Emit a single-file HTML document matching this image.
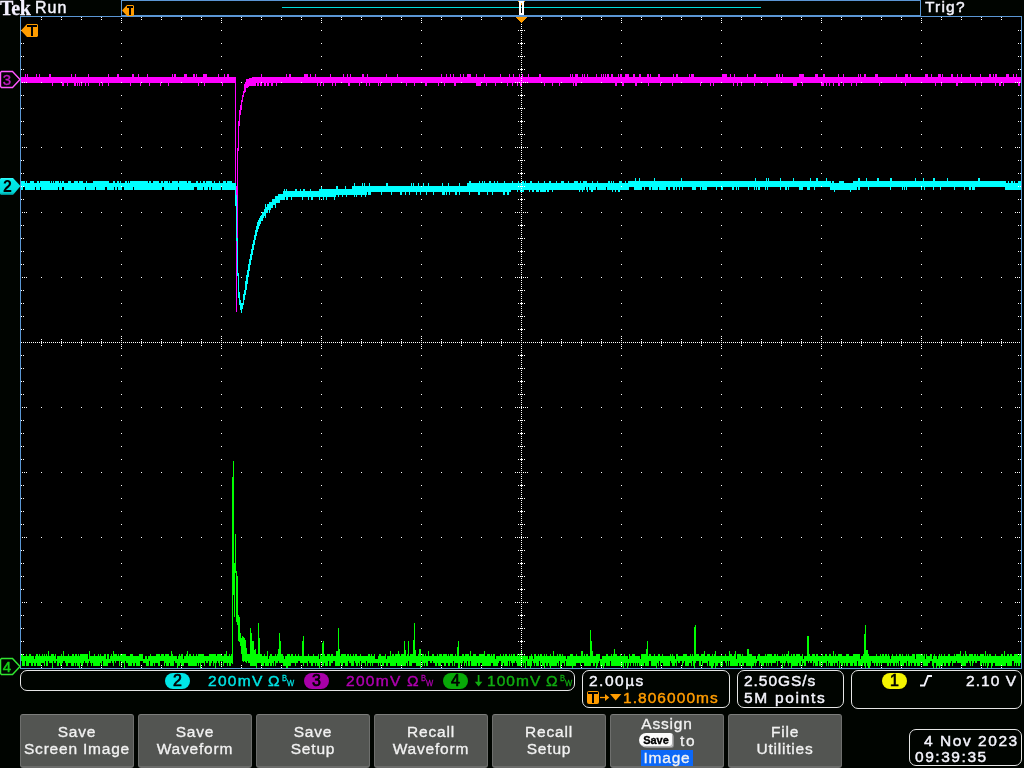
<!DOCTYPE html>
<html>
<head>
<meta charset="utf-8">
<title>Tek scope</title>
<style>
html,body{margin:0;padding:0;background:#000400;}
body{will-change:transform;width:1024px;height:768px;position:relative;overflow:hidden;font-family:"Liberation Sans",sans-serif;color:#f4f4fc;}
.abs{position:absolute;}
#tek{left:0;top:-4px;font-family:"Liberation Serif",serif;font-weight:bold;font-size:20px;letter-spacing:-0.3px;-webkit-text-stroke:0.3px;color:#f4f0ff;line-height:24px;}
#run{left:35px;top:-1px;font-size:16px;letter-spacing:1.0px;line-height:18px;-webkit-text-stroke:0.45px;}
#trig{left:925px;top:-2px;font-size:15.5px;letter-spacing:1.2px;line-height:18px;-webkit-text-stroke:0.45px;}
#rec{left:121px;top:0;width:798px;height:14px;border:1px solid #5b97d4;}
#grat{left:20px;top:16px;width:1000px;height:651px;border:1px solid #5b97d4;background:#000;}
svg{position:absolute;left:0;top:0;}
.box{position:absolute;border:1px solid #e6e6e6;border-radius:7px;box-sizing:border-box;}
.t{position:absolute;font-size:15.5px;line-height:18px;white-space:nowrap;letter-spacing:1.05px;-webkit-text-stroke:0.45px;}
.pill{position:absolute;width:25px;height:16px;border-radius:8px;color:#000;font-size:16px;line-height:16px;text-align:center;-webkit-text-stroke:0.7px;}
.bw{position:absolute;font-size:9.5px;line-height:9px;letter-spacing:0;transform-origin:0 0;transform:scaleX(0.8);-webkit-text-stroke:0.3px;}
.btn{position:absolute;top:714px;width:114px;height:54px;box-sizing:border-box;background:#535552;border:1px solid #6e6f6d;border-top-color:#7d7e7c;border-bottom:2px solid #6b6c6a;border-radius:3px;text-align:center;font-size:15.5px;line-height:18px;letter-spacing:0.8px;color:#f2f2f2;-webkit-text-stroke:0.32px;}
.btn span{position:absolute;left:0;width:112px;text-align:center;white-space:nowrap;}
</style>
</head>
<body>
<div class="abs" id="rec"></div>
<div class="abs" id="grat"></div>
<div class="abs" id="tek">Tek</div>
<div class="abs" id="run">Run</div>
<div class="abs" id="trig">Trig?</div>

<svg width="1024" height="768" viewBox="0 0 1024 768" shape-rendering="crispEdges" fill="none" stroke-width="1">
<!-- record view line -->
<path d="M282 7.5H761" stroke="#00dede"/>
<!-- waveforms -->
<path d="M21.5 77V83M22.5 77V83M23.5 77V83M24.5 77V83M25.5 74V83M26.5 77V83M27.5 74V83M28.5 77V83M29.5 77V83M30.5 77V83M31.5 77V83M32.5 77V83M33.5 77V83M34.5 77V83M35.5 77V83M36.5 74V83M37.5 77V83M38.5 77V83M39.5 74V83M40.5 77V83M41.5 77V83M42.5 77V83M43.5 77V83M44.5 77V83M45.5 77V83M46.5 77V83M47.5 77V83M48.5 77V83M49.5 74V83M50.5 74V83M51.5 77V83M52.5 77V86M53.5 77V83M54.5 77V83M55.5 77V83M56.5 77V83M57.5 77V83M58.5 77V83M59.5 77V83M60.5 77V83M61.5 77V83M62.5 77V86M63.5 77V86M64.5 77V83M65.5 77V83M66.5 77V83M67.5 77V86M68.5 77V83M69.5 77V83M70.5 77V83M71.5 74V83M72.5 77V83M73.5 77V83M74.5 77V86M75.5 74V86M76.5 77V83M77.5 77V86M78.5 77V83M79.5 77V86M80.5 77V83M81.5 77V86M82.5 77V83M83.5 77V83M84.5 77V83M85.5 77V86M86.5 77V83M87.5 77V83M88.5 74V86M89.5 77V83M90.5 77V83M91.5 77V83M92.5 77V83M93.5 77V83M94.5 77V83M95.5 77V83M96.5 77V83M97.5 77V83M98.5 77V83M99.5 77V86M100.5 77V83M101.5 77V83M102.5 77V86M103.5 77V83M104.5 77V83M105.5 77V83M106.5 77V83M107.5 77V83M108.5 74V86M109.5 77V83M110.5 77V83M111.5 77V83M112.5 77V83M113.5 77V83M114.5 77V83M115.5 77V83M116.5 77V83M117.5 74V83M118.5 74V83M119.5 77V83M120.5 77V83M121.5 77V83M122.5 77V83M123.5 77V83M124.5 77V83M125.5 77V83M126.5 77V83M127.5 77V83M128.5 77V83M129.5 77V83M130.5 77V86M131.5 77V83M132.5 74V83M133.5 74V83M134.5 77V83M135.5 77V83M136.5 77V83M137.5 77V83M138.5 74V83M139.5 77V83M140.5 77V86M141.5 77V83M142.5 77V83M143.5 77V83M144.5 77V83M145.5 77V83M146.5 77V83M147.5 74V83M148.5 77V83M149.5 77V86M150.5 77V83M151.5 77V83M152.5 77V83M153.5 77V83M154.5 77V83M155.5 77V83M156.5 77V83M157.5 77V83M158.5 77V83M159.5 77V83M160.5 77V86M161.5 77V83M162.5 77V83M163.5 77V83M164.5 77V83M165.5 77V83M166.5 77V83M167.5 77V83M168.5 77V86M169.5 77V83M170.5 77V83M171.5 77V83M172.5 74V83M173.5 77V83M174.5 74V83M175.5 74V83M176.5 77V83M177.5 77V83M178.5 77V83M179.5 77V83M180.5 77V83M181.5 77V83M182.5 77V83M183.5 77V83M184.5 74V83M185.5 74V83M186.5 74V83M187.5 77V83M188.5 77V83M189.5 77V83M190.5 77V83M191.5 77V83M192.5 77V83M193.5 74V83M194.5 74V83M195.5 77V83M196.5 74V83M197.5 77V83M198.5 77V86M199.5 77V83M200.5 77V83M201.5 77V83M202.5 77V83M203.5 74V83M204.5 74V86M205.5 74V83M206.5 74V83M207.5 77V83M208.5 77V83M209.5 77V83M210.5 77V83M211.5 77V83M212.5 77V83M213.5 77V83M214.5 77V83M215.5 77V83M216.5 77V83M217.5 77V83M218.5 74V83M219.5 77V83M220.5 77V83M221.5 77V83M222.5 77V86M223.5 77V83M224.5 74V83M225.5 77V83M226.5 77V83M227.5 74V83M228.5 74V83M229.5 77V83M230.5 77V83M231.5 77V83M232.5 77V83M233.5 77V83M234.5 77V83M235.5 77V187M236.5 186V312M237.5 148V241M238.5 121V151M239.5 110V126M240.5 105V115M241.5 100V110M242.5 95V102M243.5 91V97M244.5 84V93M245.5 82V92M246.5 79V88M247.5 79V88M248.5 79V87M249.5 78V86M250.5 78V86M251.5 78V86M252.5 77V86M253.5 77V86M254.5 77V86M255.5 77V86M256.5 77V83M257.5 77V86M258.5 77V86M259.5 77V83M260.5 77V86M261.5 74V86M262.5 77V83M263.5 77V83M264.5 77V86M265.5 77V86M266.5 77V83M267.5 77V86M268.5 77V86M269.5 77V83M270.5 77V83M271.5 77V86M272.5 77V86M273.5 77V83M274.5 77V83M275.5 77V83M276.5 77V86M277.5 77V83M278.5 77V83M279.5 77V83M280.5 77V83M281.5 77V83M282.5 77V83M283.5 77V83M284.5 77V83M285.5 77V83M286.5 74V83M287.5 77V83M288.5 77V83M289.5 74V83M290.5 74V83M291.5 77V83M292.5 77V83M293.5 77V83M294.5 77V83M295.5 77V83M296.5 77V83M297.5 77V83M298.5 77V83M299.5 77V83M300.5 77V83M301.5 77V83M302.5 77V83M303.5 77V83M304.5 74V83M305.5 74V83M306.5 74V83M307.5 74V83M308.5 77V83M309.5 77V83M310.5 74V83M311.5 77V83M312.5 77V83M313.5 77V83M314.5 77V83M315.5 74V83M316.5 77V83M317.5 77V86M318.5 77V83M319.5 77V83M320.5 77V86M321.5 77V83M322.5 77V83M323.5 77V86M324.5 77V83M325.5 77V83M326.5 77V83M327.5 77V83M328.5 77V83M329.5 77V83M330.5 74V83M331.5 77V83M332.5 77V86M333.5 77V83M334.5 77V83M335.5 77V86M336.5 77V83M337.5 77V83M338.5 77V83M339.5 77V83M340.5 77V83M341.5 77V83M342.5 77V83M343.5 74V83M344.5 77V83M345.5 77V83M346.5 77V83M347.5 74V83M348.5 77V86M349.5 77V86M350.5 74V83M351.5 77V83M352.5 77V83M353.5 77V83M354.5 77V83M355.5 77V83M356.5 77V83M357.5 77V83M358.5 77V83M359.5 77V86M360.5 77V83M361.5 77V83M362.5 74V83M363.5 74V83M364.5 77V83M365.5 77V83M366.5 77V86M367.5 74V83M368.5 77V83M369.5 77V86M370.5 77V83M371.5 77V83M372.5 77V83M373.5 77V83M374.5 77V83M375.5 77V83M376.5 77V83M377.5 77V83M378.5 77V86M379.5 77V83M380.5 77V86M381.5 77V83M382.5 77V83M383.5 77V83M384.5 77V83M385.5 77V83M386.5 74V83M387.5 77V83M388.5 77V83M389.5 77V83M390.5 77V83M391.5 77V86M392.5 77V83M393.5 77V83M394.5 77V83M395.5 77V83M396.5 77V83M397.5 74V83M398.5 77V83M399.5 77V83M400.5 77V83M401.5 77V83M402.5 77V83M403.5 77V83M404.5 77V83M405.5 77V83M406.5 77V86M407.5 77V83M408.5 77V83M409.5 77V83M410.5 77V83M411.5 77V83M412.5 77V83M413.5 77V83M414.5 77V86M415.5 77V83M416.5 77V83M417.5 77V83M418.5 77V83M419.5 77V83M420.5 77V83M421.5 77V83M422.5 77V83M423.5 77V83M424.5 77V83M425.5 77V86M426.5 77V86M427.5 77V83M428.5 77V83M429.5 77V83M430.5 77V83M431.5 77V83M432.5 77V83M433.5 77V83M434.5 77V83M435.5 77V83M436.5 77V83M437.5 77V83M438.5 77V86M439.5 77V83M440.5 77V83M441.5 74V83M442.5 77V83M443.5 77V83M444.5 77V86M445.5 77V83M446.5 74V83M447.5 77V83M448.5 77V83M449.5 77V83M450.5 74V83M451.5 77V83M452.5 77V83M453.5 74V83M454.5 77V86M455.5 77V86M456.5 77V83M457.5 77V83M458.5 77V83M459.5 77V83M460.5 74V83M461.5 77V83M462.5 77V83M463.5 74V83M464.5 77V83M465.5 77V83M466.5 77V83M467.5 74V83M468.5 74V83M469.5 74V83M470.5 74V83M471.5 77V83M472.5 77V83M473.5 77V83M474.5 77V83M475.5 77V83M476.5 74V86M477.5 77V86M478.5 77V86M479.5 77V86M480.5 77V86M481.5 77V83M482.5 77V83M483.5 77V83M484.5 74V83M485.5 77V83M486.5 77V86M487.5 77V83M488.5 77V83M489.5 77V83M490.5 77V83M491.5 77V83M492.5 77V83M493.5 77V83M494.5 77V83M495.5 77V86M496.5 77V83M497.5 77V83M498.5 77V83M499.5 77V83M500.5 74V83M501.5 77V83M502.5 77V83M503.5 77V83M504.5 77V83M505.5 77V83M506.5 77V83M507.5 77V86M508.5 77V83M509.5 74V83M510.5 77V83M511.5 77V83M512.5 77V86M513.5 74V83M514.5 77V83M515.5 77V83M516.5 77V83M517.5 77V86M518.5 77V83M519.5 74V83M520.5 77V86M521.5 77V86M522.5 74V83M523.5 77V83M524.5 77V83M525.5 77V83M526.5 77V83M527.5 77V83M528.5 74V83M529.5 77V83M530.5 77V83M531.5 77V83M532.5 77V83M533.5 77V83M534.5 77V83M535.5 77V83M536.5 77V83M537.5 77V83M538.5 77V83M539.5 74V83M540.5 74V83M541.5 77V83M542.5 77V83M543.5 77V83M544.5 77V86M545.5 77V83M546.5 77V83M547.5 77V83M548.5 77V83M549.5 77V83M550.5 77V83M551.5 77V83M552.5 77V86M553.5 77V83M554.5 77V83M555.5 77V83M556.5 77V83M557.5 77V83M558.5 77V83M559.5 77V86M560.5 77V83M561.5 77V83M562.5 77V83M563.5 77V83M564.5 77V83M565.5 77V83M566.5 77V83M567.5 77V83M568.5 77V83M569.5 77V83M570.5 74V83M571.5 77V83M572.5 74V83M573.5 77V86M574.5 77V83M575.5 74V86M576.5 74V86M577.5 74V83M578.5 77V83M579.5 77V83M580.5 77V83M581.5 77V83M582.5 74V83M583.5 77V83M584.5 74V83M585.5 77V83M586.5 77V83M587.5 74V83M588.5 77V83M589.5 77V83M590.5 77V83M591.5 77V83M592.5 77V83M593.5 77V83M594.5 77V83M595.5 77V83M596.5 74V83M597.5 77V83M598.5 77V83M599.5 77V83M600.5 77V83M601.5 74V83M602.5 77V83M603.5 74V83M604.5 77V83M605.5 74V83M606.5 77V83M607.5 74V83M608.5 74V83M609.5 77V83M610.5 77V83M611.5 74V83M612.5 74V83M613.5 77V83M614.5 77V83M615.5 77V86M616.5 77V86M617.5 77V83M618.5 74V83M619.5 77V83M620.5 74V83M621.5 74V83M622.5 77V86M623.5 77V86M624.5 77V83M625.5 74V83M626.5 74V83M627.5 74V83M628.5 74V83M629.5 77V83M630.5 77V83M631.5 77V83M632.5 77V83M633.5 74V83M634.5 74V83M635.5 77V86M636.5 77V86M637.5 77V83M638.5 77V83M639.5 74V83M640.5 74V83M641.5 77V83M642.5 77V83M643.5 77V83M644.5 77V83M645.5 77V83M646.5 77V83M647.5 74V83M648.5 74V86M649.5 77V83M650.5 74V83M651.5 77V83M652.5 77V83M653.5 77V83M654.5 77V83M655.5 77V83M656.5 77V83M657.5 77V83M658.5 74V83M659.5 74V83M660.5 77V86M661.5 77V83M662.5 77V83M663.5 77V83M664.5 77V83M665.5 77V83M666.5 77V83M667.5 77V83M668.5 77V83M669.5 77V83M670.5 77V83M671.5 77V83M672.5 77V86M673.5 74V83M674.5 77V83M675.5 77V83M676.5 74V83M677.5 74V83M678.5 77V83M679.5 77V83M680.5 77V83M681.5 77V83M682.5 77V83M683.5 77V83M684.5 77V83M685.5 77V83M686.5 77V83M687.5 77V83M688.5 77V83M689.5 74V83M690.5 77V83M691.5 74V83M692.5 74V83M693.5 74V83M694.5 77V83M695.5 77V83M696.5 77V83M697.5 77V83M698.5 77V83M699.5 77V83M700.5 77V86M701.5 77V83M702.5 77V83M703.5 77V83M704.5 77V83M705.5 77V83M706.5 77V83M707.5 77V83M708.5 77V83M709.5 77V83M710.5 77V86M711.5 77V83M712.5 77V83M713.5 77V86M714.5 77V83M715.5 77V83M716.5 77V83M717.5 77V83M718.5 77V83M719.5 77V83M720.5 77V83M721.5 77V83M722.5 74V83M723.5 74V83M724.5 74V83M725.5 74V83M726.5 74V83M727.5 77V83M728.5 77V83M729.5 77V83M730.5 74V83M731.5 77V83M732.5 77V83M733.5 77V86M734.5 74V83M735.5 77V83M736.5 77V83M737.5 77V86M738.5 77V83M739.5 77V83M740.5 77V83M741.5 77V86M742.5 77V83M743.5 77V83M744.5 77V83M745.5 77V83M746.5 77V83M747.5 74V83M748.5 77V83M749.5 77V83M750.5 77V83M751.5 77V83M752.5 77V83M753.5 77V83M754.5 74V86M755.5 74V83M756.5 77V83M757.5 77V83M758.5 77V83M759.5 77V83M760.5 77V83M761.5 77V83M762.5 77V83M763.5 77V83M764.5 77V83M765.5 77V83M766.5 77V83M767.5 77V86M768.5 77V83M769.5 77V83M770.5 77V83M771.5 77V83M772.5 77V83M773.5 77V83M774.5 77V83M775.5 77V83M776.5 74V83M777.5 74V83M778.5 77V83M779.5 74V83M780.5 77V83M781.5 77V83M782.5 74V83M783.5 77V83M784.5 77V83M785.5 77V83M786.5 77V83M787.5 77V83M788.5 77V83M789.5 77V83M790.5 77V83M791.5 77V83M792.5 77V83M793.5 77V86M794.5 77V86M795.5 77V86M796.5 77V86M797.5 77V83M798.5 77V83M799.5 74V83M800.5 74V83M801.5 74V83M802.5 74V86M803.5 74V83M804.5 77V83M805.5 77V83M806.5 77V83M807.5 77V83M808.5 77V83M809.5 77V83M810.5 77V83M811.5 77V83M812.5 77V83M813.5 77V83M814.5 77V83M815.5 74V83M816.5 74V83M817.5 74V83M818.5 77V83M819.5 77V83M820.5 77V83M821.5 77V86M822.5 77V86M823.5 74V86M824.5 74V83M825.5 77V83M826.5 77V86M827.5 77V83M828.5 77V83M829.5 77V86M830.5 77V83M831.5 77V83M832.5 77V83M833.5 77V86M834.5 77V83M835.5 77V83M836.5 77V83M837.5 77V83M838.5 74V86M839.5 77V86M840.5 77V83M841.5 77V83M842.5 77V83M843.5 74V86M844.5 77V83M845.5 77V83M846.5 77V83M847.5 77V83M848.5 77V83M849.5 77V83M850.5 77V83M851.5 77V86M852.5 77V83M853.5 77V83M854.5 77V83M855.5 77V83M856.5 77V86M857.5 77V83M858.5 74V83M859.5 77V83M860.5 74V83M861.5 77V83M862.5 77V83M863.5 77V83M864.5 74V83M865.5 74V83M866.5 77V83M867.5 77V83M868.5 77V83M869.5 77V83M870.5 77V83M871.5 77V83M872.5 77V83M873.5 77V83M874.5 77V83M875.5 74V83M876.5 74V83M877.5 74V83M878.5 77V83M879.5 77V86M880.5 77V83M881.5 77V83M882.5 77V83M883.5 77V83M884.5 77V83M885.5 77V83M886.5 77V83M887.5 77V83M888.5 77V83M889.5 77V83M890.5 77V83M891.5 77V83M892.5 77V83M893.5 77V83M894.5 77V83M895.5 77V83M896.5 74V83M897.5 77V83M898.5 77V83M899.5 77V83M900.5 77V83M901.5 77V83M902.5 77V83M903.5 77V83M904.5 77V83M905.5 74V86M906.5 74V83M907.5 74V83M908.5 77V83M909.5 77V83M910.5 74V83M911.5 77V83M912.5 77V83M913.5 77V83M914.5 77V83M915.5 77V83M916.5 77V83M917.5 77V83M918.5 77V83M919.5 77V83M920.5 77V83M921.5 77V83M922.5 77V83M923.5 77V83M924.5 77V83M925.5 74V83M926.5 74V83M927.5 74V83M928.5 77V83M929.5 77V83M930.5 77V83M931.5 74V83M932.5 77V83M933.5 77V83M934.5 77V83M935.5 77V86M936.5 77V83M937.5 77V83M938.5 74V83M939.5 74V83M940.5 74V83M941.5 77V86M942.5 74V83M943.5 77V83M944.5 77V83M945.5 77V83M946.5 77V83M947.5 77V83M948.5 77V83M949.5 77V83M950.5 77V83M951.5 74V83M952.5 74V83M953.5 77V83M954.5 77V83M955.5 77V83M956.5 77V86M957.5 74V86M958.5 77V83M959.5 77V83M960.5 77V83M961.5 74V83M962.5 77V83M963.5 77V83M964.5 77V83M965.5 77V83M966.5 77V83M967.5 77V83M968.5 77V83M969.5 77V83M970.5 74V83M971.5 77V83M972.5 77V83M973.5 77V83M974.5 77V83M975.5 77V86M976.5 77V83M977.5 77V83M978.5 77V83M979.5 77V83M980.5 74V83M981.5 77V86M982.5 77V83M983.5 77V83M984.5 77V83M985.5 77V83M986.5 77V83M987.5 77V83M988.5 77V83M989.5 74V83M990.5 74V83M991.5 77V83M992.5 77V83M993.5 74V83M994.5 77V83M995.5 74V86M996.5 74V83M997.5 77V83M998.5 77V83M999.5 77V86M1000.5 77V86M1001.5 77V83M1002.5 77V83M1003.5 77V86M1004.5 77V83M1005.5 77V83M1006.5 74V83M1007.5 74V83M1008.5 74V83M1009.5 77V83M1010.5 77V83M1011.5 77V83M1012.5 77V83M1013.5 74V83M1014.5 77V83M1015.5 77V83M1016.5 74V83M1017.5 77V83M1018.5 77V86M1019.5 77V86M1020.5 77V83" stroke="#ff00ff"/>
<path d="M21.5 181V190M22.5 181V190M23.5 181V187M24.5 181V187M25.5 183V190M26.5 181V190M27.5 183V190M28.5 183V190M29.5 183V190M30.5 181V190M31.5 181V190M32.5 181V190M33.5 181V190M34.5 183V190M35.5 183V187M36.5 183V190M37.5 181V190M38.5 181V190M39.5 183V190M40.5 181V187M41.5 181V190M42.5 181V190M43.5 181V190M44.5 181V190M45.5 181V190M46.5 181V190M47.5 181V190M48.5 181V190M49.5 181V190M50.5 183V190M51.5 181V190M52.5 183V190M53.5 181V190M54.5 183V190M55.5 181V190M56.5 181V190M57.5 181V190M58.5 181V187M59.5 183V190M60.5 181V190M61.5 183V190M62.5 181V187M63.5 181V187M64.5 183V190M65.5 183V190M66.5 183V190M67.5 183V190M68.5 181V190M69.5 181V190M70.5 181V190M71.5 183V190M72.5 183V190M73.5 183V190M74.5 181V190M75.5 181V190M76.5 181V190M77.5 181V190M78.5 183V190M79.5 181V190M80.5 181V190M81.5 181V190M82.5 181V190M83.5 183V190M84.5 183V190M85.5 183V187M86.5 181V190M87.5 183V190M88.5 183V190M89.5 183V190M90.5 183V190M91.5 183V190M92.5 183V190M93.5 181V190M94.5 181V190M95.5 181V187M96.5 181V190M97.5 181V190M98.5 181V190M99.5 181V190M100.5 181V190M101.5 181V190M102.5 181V190M103.5 181V190M104.5 181V190M105.5 181V187M106.5 181V187M107.5 181V190M108.5 181V190M109.5 183V190M110.5 183V190M111.5 183V190M112.5 183V190M113.5 181V190M114.5 181V187M115.5 183V190M116.5 183V190M117.5 181V187M118.5 181V190M119.5 183V190M120.5 181V190M121.5 183V190M122.5 183V187M123.5 183V187M124.5 183V190M125.5 181V190M126.5 181V190M127.5 183V190M128.5 181V190M129.5 183V190M130.5 181V190M131.5 181V190M132.5 181V190M133.5 181V187M134.5 181V190M135.5 181V190M136.5 181V190M137.5 181V190M138.5 181V190M139.5 181V190M140.5 181V190M141.5 181V190M142.5 181V190M143.5 181V190M144.5 181V190M145.5 181V190M146.5 181V190M147.5 181V190M148.5 183V190M149.5 181V190M150.5 181V190M151.5 183V190M152.5 183V190M153.5 181V190M154.5 181V190M155.5 181V190M156.5 181V190M157.5 181V190M158.5 181V190M159.5 183V190M160.5 183V190M161.5 181V190M162.5 181V187M163.5 183V187M164.5 181V190M165.5 181V190M166.5 181V190M167.5 181V190M168.5 183V190M169.5 181V190M170.5 183V190M171.5 183V190M172.5 181V190M173.5 181V190M174.5 181V190M175.5 181V190M176.5 181V190M177.5 181V190M178.5 183V187M179.5 181V190M180.5 181V190M181.5 181V190M182.5 181V190M183.5 181V190M184.5 181V190M185.5 181V190M186.5 181V190M187.5 183V190M188.5 181V190M189.5 181V190M190.5 181V190M191.5 183V190M192.5 183V190M193.5 183V190M194.5 183V187M195.5 183V187M196.5 181V187M197.5 181V190M198.5 183V190M199.5 183V190M200.5 181V190M201.5 183V190M202.5 183V190M203.5 181V187M204.5 181V190M205.5 183V190M206.5 181V190M207.5 181V190M208.5 181V187M209.5 181V190M210.5 181V190M211.5 181V187M212.5 183V190M213.5 183V190M214.5 181V190M215.5 183V190M216.5 183V190M217.5 183V190M218.5 183V190M219.5 181V190M220.5 183V190M221.5 183V187M222.5 183V190M223.5 181V190M224.5 181V190M225.5 181V190M226.5 183V190M227.5 181V190M228.5 181V190M229.5 181V190M230.5 181V190M231.5 181V190M232.5 183V190M233.5 183V190M234.5 183V190M235.5 183V206M236.5 195V241M237.5 238V276M238.5 273V298M239.5 292V305M240.5 300V310M241.5 303V313M242.5 303V309M243.5 294V305M244.5 290V300M245.5 281V295M246.5 275V290M247.5 270V284M248.5 264V277M249.5 259V271M250.5 254V265M251.5 249V260M252.5 244V255M253.5 240V250M254.5 235V245M255.5 230V240M256.5 226V236M257.5 222V232M258.5 220V229M259.5 218V226M260.5 216V224M261.5 215V221M262.5 212V221M263.5 212V218M264.5 209V216M265.5 204V218M266.5 207V213M267.5 204V213M268.5 204V210M269.5 202V213M270.5 202V210M271.5 202V208M272.5 199V208M273.5 199V205M274.5 199V205M275.5 196V208M276.5 196V203M277.5 196V203M278.5 194V203M279.5 194V203M280.5 194V200M281.5 194V200M282.5 194V200M283.5 191V200M284.5 189V200M285.5 191V197M286.5 189V200M287.5 191V200M288.5 191V197M289.5 191V197M290.5 191V197M291.5 191V200M292.5 191V197M293.5 191V197M294.5 191V197M295.5 189V197M296.5 189V197M297.5 191V197M298.5 191V197M299.5 191V197M300.5 189V197M301.5 191V197M302.5 191V200M303.5 189V197M304.5 189V197M305.5 191V197M306.5 191V197M307.5 191V197M308.5 191V200M309.5 191V197M310.5 189V197M311.5 191V200M312.5 191V200M313.5 191V197M314.5 191V197M315.5 191V197M316.5 191V197M317.5 191V197M318.5 191V197M319.5 189V200M320.5 189V197M321.5 186V197M322.5 189V197M323.5 189V200M324.5 189V197M325.5 189V197M326.5 189V200M327.5 189V197M328.5 189V197M329.5 189V197M330.5 189V197M331.5 189V197M332.5 189V197M333.5 189V197M334.5 189V200M335.5 189V197M336.5 186V195M337.5 186V195M338.5 189V197M339.5 189V195M340.5 189V195M341.5 189V195M342.5 189V197M343.5 189V195M344.5 189V195M345.5 186V195M346.5 189V197M347.5 189V195M348.5 189V195M349.5 189V195M350.5 189V195M351.5 189V195M352.5 186V195M353.5 186V195M354.5 183V197M355.5 186V195M356.5 186V197M357.5 186V195M358.5 186V195M359.5 186V195M360.5 186V195M361.5 186V197M362.5 183V195M363.5 186V195M364.5 183V195M365.5 186V197M366.5 186V195M367.5 186V192M368.5 186V195M369.5 183V195M370.5 186V195M371.5 186V192M372.5 186V192M373.5 186V192M374.5 186V192M375.5 186V192M376.5 186V192M377.5 186V192M378.5 186V192M379.5 186V192M380.5 186V192M381.5 186V195M382.5 186V192M383.5 186V192M384.5 186V192M385.5 186V192M386.5 183V192M387.5 183V192M388.5 186V192M389.5 186V192M390.5 186V192M391.5 186V195M392.5 186V192M393.5 186V192M394.5 186V192M395.5 186V192M396.5 186V192M397.5 186V192M398.5 186V192M399.5 186V192M400.5 186V195M401.5 186V195M402.5 186V192M403.5 186V192M404.5 186V192M405.5 186V195M406.5 186V192M407.5 186V192M408.5 186V192M409.5 186V195M410.5 186V192M411.5 183V192M412.5 186V192M413.5 183V192M414.5 186V192M415.5 186V192M416.5 186V195M417.5 186V192M418.5 183V192M419.5 186V192M420.5 186V195M421.5 186V192M422.5 186V192M423.5 183V192M424.5 186V192M425.5 186V192M426.5 186V195M427.5 186V192M428.5 183V192M429.5 186V192M430.5 186V192M431.5 186V192M432.5 186V192M433.5 186V195M434.5 186V192M435.5 186V192M436.5 186V192M437.5 186V192M438.5 186V192M439.5 186V192M440.5 186V192M441.5 186V192M442.5 183V195M443.5 186V195M444.5 186V195M445.5 186V192M446.5 186V195M447.5 186V192M448.5 183V192M449.5 186V195M450.5 186V192M451.5 186V192M452.5 186V192M453.5 186V192M454.5 186V192M455.5 186V195M456.5 186V195M457.5 186V192M458.5 186V192M459.5 183V195M460.5 186V192M461.5 186V192M462.5 186V192M463.5 186V192M464.5 186V192M465.5 186V192M466.5 186V192M467.5 183V192M468.5 183V192M469.5 181V195M470.5 181V192M471.5 183V192M472.5 183V192M473.5 183V192M474.5 183V192M475.5 183V192M476.5 183V192M477.5 183V192M478.5 183V195M479.5 181V195M480.5 183V192M481.5 183V192M482.5 181V192M483.5 183V192M484.5 181V192M485.5 183V192M486.5 183V192M487.5 183V195M488.5 183V192M489.5 181V192M490.5 181V192M491.5 183V192M492.5 183V195M493.5 183V192M494.5 181V192M495.5 183V192M496.5 183V192M497.5 181V192M498.5 183V192M499.5 183V192M500.5 183V192M501.5 183V192M502.5 183V192M503.5 183V195M504.5 181V195M505.5 183V192M506.5 183V192M507.5 183V195M508.5 183V195M509.5 183V192M510.5 183V192M511.5 183V190M512.5 181V190M513.5 183V190M514.5 183V190M515.5 183V190M516.5 183V190M517.5 183V192M518.5 181V190M519.5 183V190M520.5 183V192M521.5 183V192M522.5 181V192M523.5 181V192M524.5 183V190M525.5 181V190M526.5 183V190M527.5 183V190M528.5 183V190M529.5 183V192M530.5 181V190M531.5 181V190M532.5 183V192M533.5 183V192M534.5 183V190M535.5 183V190M536.5 183V192M537.5 183V192M538.5 181V192M539.5 183V190M540.5 183V192M541.5 183V192M542.5 183V192M543.5 183V192M544.5 181V192M545.5 183V192M546.5 183V190M547.5 183V192M548.5 183V192M549.5 181V190M550.5 181V190M551.5 183V190M552.5 183V192M553.5 183V190M554.5 183V190M555.5 183V190M556.5 181V190M557.5 183V190M558.5 183V190M559.5 183V190M560.5 183V190M561.5 181V190M562.5 181V190M563.5 181V190M564.5 183V190M565.5 183V190M566.5 183V190M567.5 183V190M568.5 181V190M569.5 183V190M570.5 183V190M571.5 183V190M572.5 183V190M573.5 183V190M574.5 181V190M575.5 181V190M576.5 181V190M577.5 181V190M578.5 183V190M579.5 183V192M580.5 181V190M581.5 183V190M582.5 183V192M583.5 181V190M584.5 181V190M585.5 181V187M586.5 181V190M587.5 183V192M588.5 183V187M589.5 183V190M590.5 183V190M591.5 183V192M592.5 181V192M593.5 183V190M594.5 183V190M595.5 183V190M596.5 183V187M597.5 181V190M598.5 183V190M599.5 183V190M600.5 183V190M601.5 183V190M602.5 183V190M603.5 183V190M604.5 183V190M605.5 183V190M606.5 183V187M607.5 183V190M608.5 181V190M609.5 181V190M610.5 183V190M611.5 181V190M612.5 183V192M613.5 181V190M614.5 183V190M615.5 183V192M616.5 183V190M617.5 183V190M618.5 183V192M619.5 181V192M620.5 181V190M621.5 181V190M622.5 183V190M623.5 183V190M624.5 183V190M625.5 181V190M626.5 183V190M627.5 183V190M628.5 181V190M629.5 181V187M630.5 181V187M631.5 181V187M632.5 181V187M633.5 181V187M634.5 181V190M635.5 178V190M636.5 181V190M637.5 181V190M638.5 181V190M639.5 178V190M640.5 181V190M641.5 181V190M642.5 181V187M643.5 181V187M644.5 181V190M645.5 181V187M646.5 181V187M647.5 181V187M648.5 181V187M649.5 181V190M650.5 181V190M651.5 181V187M652.5 181V190M653.5 181V190M654.5 178V190M655.5 181V190M656.5 181V190M657.5 181V190M658.5 181V187M659.5 181V190M660.5 181V190M661.5 181V190M662.5 181V190M663.5 181V190M664.5 181V190M665.5 181V190M666.5 181V187M667.5 181V187M668.5 181V190M669.5 181V190M670.5 181V187M671.5 181V187M672.5 181V187M673.5 181V190M674.5 181V190M675.5 181V187M676.5 181V190M677.5 181V187M678.5 181V187M679.5 181V190M680.5 181V187M681.5 178V187M682.5 181V190M683.5 181V187M684.5 181V187M685.5 181V187M686.5 181V187M687.5 181V187M688.5 181V187M689.5 181V187M690.5 181V187M691.5 181V187M692.5 181V190M693.5 181V190M694.5 181V190M695.5 181V190M696.5 181V187M697.5 181V187M698.5 181V187M699.5 181V187M700.5 181V190M701.5 181V187M702.5 181V190M703.5 181V190M704.5 181V190M705.5 181V190M706.5 181V190M707.5 181V187M708.5 181V187M709.5 181V187M710.5 181V187M711.5 181V187M712.5 181V187M713.5 181V187M714.5 181V187M715.5 181V187M716.5 181V190M717.5 181V187M718.5 181V187M719.5 181V187M720.5 181V187M721.5 181V190M722.5 181V190M723.5 181V187M724.5 181V187M725.5 181V187M726.5 181V187M727.5 181V187M728.5 181V187M729.5 181V187M730.5 181V187M731.5 181V187M732.5 181V190M733.5 181V190M734.5 181V187M735.5 181V187M736.5 181V190M737.5 181V187M738.5 181V190M739.5 181V187M740.5 181V187M741.5 181V187M742.5 181V187M743.5 181V187M744.5 181V187M745.5 181V187M746.5 181V187M747.5 181V187M748.5 181V190M749.5 181V187M750.5 181V187M751.5 181V187M752.5 181V187M753.5 181V187M754.5 181V190M755.5 178V187M756.5 181V190M757.5 181V187M758.5 181V190M759.5 181V190M760.5 181V187M761.5 181V187M762.5 181V187M763.5 181V187M764.5 181V187M765.5 181V190M766.5 178V187M767.5 181V190M768.5 178V187M769.5 181V187M770.5 181V187M771.5 181V187M772.5 181V187M773.5 181V187M774.5 181V187M775.5 181V187M776.5 181V187M777.5 181V187M778.5 181V187M779.5 181V187M780.5 178V190M781.5 181V187M782.5 181V187M783.5 181V187M784.5 181V187M785.5 181V190M786.5 181V190M787.5 181V187M788.5 181V190M789.5 181V187M790.5 181V187M791.5 181V187M792.5 181V187M793.5 178V187M794.5 181V187M795.5 181V187M796.5 181V187M797.5 181V187M798.5 181V187M799.5 181V190M800.5 181V190M801.5 181V190M802.5 181V190M803.5 181V187M804.5 181V187M805.5 181V187M806.5 181V187M807.5 181V190M808.5 181V190M809.5 181V190M810.5 178V187M811.5 181V187M812.5 181V187M813.5 181V187M814.5 181V190M815.5 181V187M816.5 178V187M817.5 178V187M818.5 181V187M819.5 181V187M820.5 181V187M821.5 181V187M822.5 181V187M823.5 181V187M824.5 181V187M825.5 181V187M826.5 178V187M827.5 181V187M828.5 181V187M829.5 181V187M830.5 181V190M831.5 183V190M832.5 181V190M833.5 181V190M834.5 183V192M835.5 183V190M836.5 183V190M837.5 183V190M838.5 183V190M839.5 181V190M840.5 181V190M841.5 181V190M842.5 181V190M843.5 181V190M844.5 183V190M845.5 183V190M846.5 183V190M847.5 183V190M848.5 183V190M849.5 183V190M850.5 183V192M851.5 183V190M852.5 183V190M853.5 181V190M854.5 181V190M855.5 181V190M856.5 181V190M857.5 181V187M858.5 178V190M859.5 178V190M860.5 181V187M861.5 181V187M862.5 181V187M863.5 181V187M864.5 181V187M865.5 181V187M866.5 178V187M867.5 181V187M868.5 181V190M869.5 181V187M870.5 181V187M871.5 181V187M872.5 181V187M873.5 181V187M874.5 181V187M875.5 181V187M876.5 181V187M877.5 178V187M878.5 178V187M879.5 181V187M880.5 181V187M881.5 181V187M882.5 181V187M883.5 181V187M884.5 181V187M885.5 181V187M886.5 181V187M887.5 181V187M888.5 181V187M889.5 181V187M890.5 178V190M891.5 178V187M892.5 181V187M893.5 181V187M894.5 181V187M895.5 181V187M896.5 181V187M897.5 181V187M898.5 181V187M899.5 181V187M900.5 181V187M901.5 181V187M902.5 181V190M903.5 181V187M904.5 181V190M905.5 181V187M906.5 181V190M907.5 181V187M908.5 181V187M909.5 181V187M910.5 181V187M911.5 181V187M912.5 181V187M913.5 181V187M914.5 181V187M915.5 178V187M916.5 181V187M917.5 181V187M918.5 181V187M919.5 181V187M920.5 181V187M921.5 181V190M922.5 181V187M923.5 178V187M924.5 181V190M925.5 181V187M926.5 181V187M927.5 181V187M928.5 181V187M929.5 181V187M930.5 181V187M931.5 181V187M932.5 181V187M933.5 178V190M934.5 178V187M935.5 181V187M936.5 181V187M937.5 181V187M938.5 181V187M939.5 181V187M940.5 181V190M941.5 181V187M942.5 181V187M943.5 181V187M944.5 181V187M945.5 181V187M946.5 181V187M947.5 178V187M948.5 181V187M949.5 181V187M950.5 181V187M951.5 181V187M952.5 181V187M953.5 181V187M954.5 181V190M955.5 181V187M956.5 181V187M957.5 181V187M958.5 181V187M959.5 181V187M960.5 181V187M961.5 181V187M962.5 181V187M963.5 181V187M964.5 181V190M965.5 181V187M966.5 181V187M967.5 181V187M968.5 181V187M969.5 181V190M970.5 181V190M971.5 181V187M972.5 181V190M973.5 181V190M974.5 181V190M975.5 181V187M976.5 181V187M977.5 181V187M978.5 178V187M979.5 178V187M980.5 181V187M981.5 181V187M982.5 181V187M983.5 181V187M984.5 181V187M985.5 181V187M986.5 181V187M987.5 181V187M988.5 181V187M989.5 181V187M990.5 181V187M991.5 181V187M992.5 181V187M993.5 181V187M994.5 181V187M995.5 181V187M996.5 181V187M997.5 181V187M998.5 181V187M999.5 181V187M1000.5 181V187M1001.5 181V187M1002.5 181V187M1003.5 181V187M1004.5 181V187M1005.5 181V190M1006.5 183V190M1007.5 183V190M1008.5 181V190M1009.5 183V190M1010.5 183V190M1011.5 181V190M1012.5 181V190M1013.5 183V190M1014.5 181V190M1015.5 183V190M1016.5 183V190M1017.5 183V190M1018.5 181V190M1019.5 181V190M1020.5 181V190" stroke="#00ffff"/>
<path d="M21.5 654V661M22.5 654V666M23.5 656V666M24.5 656V666M25.5 656V661M26.5 654V666M27.5 656V666M28.5 656V666M29.5 654V663M30.5 654V663M31.5 656V666M32.5 656V666M33.5 656V663M34.5 659V666M35.5 656V666M36.5 654V663M37.5 654V666M38.5 656V666M39.5 654V666M40.5 656V666M41.5 656V663M42.5 654V663M43.5 656V663M44.5 654V666M45.5 656V661M46.5 654V666M47.5 656V666M48.5 651V661M49.5 656V663M50.5 656V663M51.5 654V663M52.5 654V668M53.5 654V661M54.5 656V663M55.5 654V663M56.5 659V661M57.5 656V666M58.5 656V666M59.5 656V663M60.5 656V666M61.5 654V666M62.5 656V663M63.5 651V661M64.5 656V661M65.5 656V663M66.5 656V666M67.5 656V666M68.5 654V663M69.5 656V663M70.5 656V663M71.5 656V666M72.5 654V666M73.5 654V666M74.5 656V663M75.5 654V666M76.5 654V663M77.5 656V666M78.5 654V666M79.5 656V668M80.5 654V663M81.5 654V666M82.5 654V666M83.5 654V663M84.5 654V661M85.5 654V663M86.5 654V663M87.5 654V666M88.5 659V663M89.5 651V661M90.5 656V663M91.5 656V666M92.5 656V663M93.5 656V666M94.5 654V666M95.5 656V666M96.5 656V666M97.5 656V666M98.5 654V666M99.5 656V666M100.5 654V663M101.5 656V666M102.5 656V661M103.5 656V666M104.5 654V666M105.5 654V666M106.5 659V666M107.5 654V666M108.5 654V663M109.5 659V663M110.5 656V663M111.5 654V661M112.5 656V663M113.5 651V666M114.5 654V661M115.5 654V663M116.5 654V661M117.5 656V661M118.5 654V661M119.5 656V666M120.5 654V661M121.5 654V666M122.5 654V663M123.5 654V663M124.5 654V668M125.5 654V661M126.5 656V663M127.5 656V663M128.5 656V666M129.5 656V666M130.5 654V666M131.5 654V666M132.5 654V663M133.5 656V666M134.5 656V666M135.5 656V663M136.5 656V666M137.5 656V666M138.5 656V666M139.5 654V666M140.5 654V661M141.5 654V661M142.5 654V661M143.5 659V663M144.5 659V663M145.5 656V663M146.5 656V666M147.5 659V666M148.5 656V666M149.5 656V661M150.5 654V666M151.5 656V666M152.5 656V666M153.5 656V663M154.5 656V666M155.5 656V663M156.5 654V663M157.5 654V663M158.5 654V666M159.5 654V666M160.5 656V661M161.5 654V661M162.5 654V661M163.5 654V661M164.5 656V666M165.5 654V663M166.5 654V666M167.5 654V666M168.5 654V666M169.5 656V663M170.5 656V666M171.5 651V666M172.5 654V666M173.5 656V666M174.5 656V661M175.5 656V663M176.5 656V663M177.5 659V668M178.5 656V666M179.5 654V666M180.5 656V663M181.5 654V666M182.5 654V666M183.5 659V666M184.5 656V663M185.5 656V663M186.5 654V663M187.5 651V663M188.5 656V666M189.5 654V666M190.5 654V666M191.5 656V666M192.5 656V666M193.5 654V666M194.5 656V666M195.5 656V666M196.5 654V666M197.5 656V663M198.5 654V666M199.5 654V663M200.5 654V668M201.5 654V663M202.5 654V663M203.5 654V663M204.5 656V666M205.5 656V661M206.5 656V663M207.5 656V663M208.5 656V661M209.5 654V666M210.5 654V666M211.5 654V663M212.5 654V661M213.5 654V666M214.5 654V663M215.5 654V668M216.5 656V663M217.5 654V661M218.5 654V663M219.5 654V666M220.5 654V661M221.5 654V666M222.5 656V661M223.5 656V666M224.5 654V663M225.5 654V663M226.5 651V663M227.5 656V666M228.5 656V663M229.5 654V666M230.5 656V666M231.5 654V663M232.5 477V664M233.5 461V595M234.5 563V617M235.5 534V573M236.5 571V622M237.5 576V625M238.5 615V641M239.5 617V642M240.5 633V646M241.5 638V654M242.5 636V661M243.5 637V662M244.5 638V661M245.5 640V662M246.5 648V663M247.5 654V661M248.5 654V663M249.5 654V663M250.5 628V666M251.5 633V666M252.5 641V666M253.5 641V666M254.5 650V666M255.5 649V666M256.5 654V668M257.5 654V663M258.5 623V663M259.5 638V663M260.5 654V663M261.5 654V666M262.5 656V666M263.5 656V666M264.5 654V663M265.5 656V666M266.5 656V666M267.5 651V666M268.5 659V666M269.5 656V663M270.5 654V666M271.5 654V666M272.5 656V663M273.5 656V666M274.5 656V661M275.5 654V666M276.5 656V663M277.5 654V663M278.5 649V661M279.5 633V663M280.5 641V663M281.5 654V663M282.5 654V663M283.5 656V666M284.5 659V666M285.5 656V666M286.5 656V668M287.5 654V668M288.5 654V666M289.5 654V666M290.5 656V666M291.5 654V663M292.5 654V663M293.5 656V663M294.5 656V663M295.5 654V666M296.5 656V663M297.5 656V663M298.5 654V661M299.5 656V661M300.5 656V663M301.5 656V663M302.5 641V663M303.5 636V666M304.5 656V663M305.5 656V663M306.5 656V663M307.5 656V666M308.5 654V661M309.5 656V663M310.5 656V663M311.5 656V666M312.5 656V666M313.5 654V663M314.5 656V663M315.5 656V666M316.5 656V663M317.5 656V666M318.5 654V666M319.5 659V668M320.5 654V663M321.5 656V663M322.5 643V666M323.5 641V666M324.5 654V663M325.5 656V666M326.5 656V666M327.5 654V666M328.5 654V661M329.5 654V666M330.5 656V666M331.5 654V663M332.5 654V663M333.5 656V661M334.5 656V661M335.5 656V666M336.5 651V666M337.5 651V666M338.5 628V666M339.5 649V666M340.5 656V663M341.5 654V666M342.5 654V666M343.5 654V663M344.5 654V663M345.5 654V666M346.5 656V666M347.5 654V666M348.5 654V661M349.5 656V663M350.5 654V663M351.5 656V666M352.5 656V666M353.5 654V666M354.5 656V661M355.5 654V663M356.5 654V666M357.5 656V666M358.5 656V663M359.5 656V666M360.5 654V661M361.5 656V666M362.5 656V663M363.5 656V663M364.5 656V663M365.5 656V666M366.5 656V661M367.5 656V666M368.5 654V663M369.5 654V663M370.5 656V666M371.5 654V663M372.5 656V666M373.5 656V663M374.5 654V663M375.5 659V663M376.5 659V663M377.5 659V663M378.5 656V666M379.5 654V663M380.5 654V666M381.5 656V663M382.5 656V666M383.5 656V666M384.5 656V663M385.5 654V663M386.5 659V666M387.5 656V666M388.5 656V663M389.5 656V663M390.5 651V666M391.5 656V666M392.5 654V666M393.5 654V666M394.5 656V666M395.5 654V666M396.5 654V663M397.5 654V666M398.5 651V666M399.5 654V666M400.5 656V666M401.5 654V666M402.5 654V666M403.5 654V666M404.5 641V666M405.5 650V666M406.5 656V663M407.5 654V666M408.5 641V661M409.5 656V666M410.5 654V666M411.5 654V666M412.5 654V663M413.5 640V663M414.5 623V663M415.5 650V663M416.5 656V666M417.5 656V666M418.5 654V666M419.5 649V666M420.5 649V668M421.5 656V661M422.5 654V666M423.5 654V663M424.5 656V666M425.5 654V663M426.5 656V666M427.5 656V666M428.5 651V661M429.5 656V661M430.5 656V663M431.5 656V663M432.5 654V661M433.5 654V663M434.5 656V663M435.5 656V666M436.5 656V666M437.5 654V663M438.5 656V666M439.5 654V666M440.5 654V666M441.5 654V663M442.5 656V663M443.5 654V663M444.5 654V666M445.5 654V666M446.5 654V663M447.5 656V663M448.5 654V666M449.5 656V666M450.5 654V663M451.5 654V663M452.5 654V666M453.5 656V661M454.5 656V666M455.5 654V663M456.5 656V663M457.5 647V663M458.5 641V668M459.5 656V668M460.5 656V663M461.5 656V666M462.5 654V663M463.5 654V661M464.5 656V666M465.5 654V663M466.5 654V666M467.5 654V661M468.5 654V666M469.5 656V666M470.5 651V661M471.5 656V666M472.5 656V666M473.5 654V666M474.5 654V666M475.5 654V666M476.5 656V666M477.5 656V663M478.5 656V666M479.5 654V666M480.5 654V663M481.5 654V663M482.5 654V666M483.5 654V666M484.5 651V666M485.5 656V666M486.5 656V666M487.5 654V666M488.5 654V666M489.5 654V666M490.5 656V666M491.5 654V663M492.5 656V663M493.5 654V666M494.5 654V666M495.5 659V666M496.5 656V666M497.5 656V666M498.5 656V663M499.5 656V661M500.5 654V661M501.5 656V666M502.5 656V666M503.5 654V663M504.5 656V666M505.5 654V666M506.5 654V666M507.5 656V666M508.5 656V661M509.5 654V666M510.5 656V661M511.5 654V663M512.5 656V666M513.5 654V663M514.5 654V663M515.5 656V661M516.5 656V663M517.5 654V666M518.5 656V666M519.5 654V666M520.5 656V666M521.5 651V666M522.5 656V663M523.5 656V666M524.5 654V663M525.5 656V668M526.5 656V661M527.5 656V666M528.5 659V666M529.5 656V666M530.5 656V668M531.5 654V666M532.5 656V661M533.5 659V663M534.5 654V666M535.5 654V663M536.5 656V666M537.5 656V666M538.5 654V666M539.5 656V661M540.5 654V666M541.5 654V663M542.5 656V666M543.5 656V666M544.5 654V668M545.5 656V663M546.5 654V666M547.5 656V666M548.5 656V663M549.5 656V666M550.5 654V668M551.5 656V666M552.5 656V666M553.5 651V666M554.5 656V666M555.5 656V666M556.5 656V666M557.5 654V663M558.5 656V666M559.5 654V661M560.5 654V668M561.5 656V666M562.5 654V663M563.5 656V663M564.5 656V666M565.5 656V661M566.5 659V666M567.5 656V666M568.5 656V666M569.5 656V666M570.5 654V666M571.5 654V666M572.5 654V668M573.5 656V666M574.5 656V666M575.5 656V666M576.5 654V663M577.5 656V663M578.5 656V663M579.5 656V663M580.5 656V666M581.5 651V663M582.5 651V663M583.5 656V663M584.5 654V666M585.5 656V666M586.5 654V666M587.5 654V666M588.5 656V666M589.5 656V666M590.5 630V666M591.5 641V663M592.5 651V663M593.5 656V666M594.5 656V666M595.5 656V663M596.5 654V668M597.5 654V666M598.5 654V663M599.5 654V661M600.5 659V666M601.5 659V668M602.5 656V666M603.5 656V668M604.5 656V666M605.5 656V663M606.5 654V666M607.5 654V666M608.5 656V666M609.5 656V666M610.5 656V661M611.5 654V666M612.5 656V666M613.5 654V666M614.5 649V666M615.5 654V666M616.5 654V666M617.5 656V666M618.5 656V666M619.5 656V666M620.5 654V666M621.5 656V666M622.5 656V666M623.5 656V668M624.5 654V663M625.5 656V666M626.5 656V663M627.5 656V668M628.5 659V666M629.5 654V663M630.5 656V666M631.5 656V663M632.5 654V663M633.5 654V666M634.5 654V663M635.5 656V666M636.5 656V663M637.5 656V666M638.5 656V663M639.5 656V666M640.5 659V666M641.5 654V666M642.5 654V666M643.5 654V666M644.5 654V663M645.5 654V666M646.5 649V666M647.5 641V666M648.5 656V666M649.5 654V661M650.5 654V661M651.5 656V666M652.5 656V666M653.5 656V666M654.5 654V666M655.5 656V666M656.5 656V668M657.5 656V663M658.5 654V666M659.5 654V661M660.5 656V666M661.5 656V663M662.5 654V663M663.5 656V666M664.5 656V666M665.5 656V666M666.5 656V666M667.5 656V666M668.5 656V666M669.5 656V666M670.5 654V661M671.5 656V663M672.5 654V666M673.5 656V666M674.5 656V666M675.5 659V663M676.5 654V666M677.5 654V661M678.5 656V663M679.5 656V663M680.5 656V661M681.5 656V661M682.5 656V666M683.5 654V663M684.5 654V661M685.5 654V666M686.5 654V666M687.5 656V666M688.5 656V666M689.5 656V663M690.5 654V663M691.5 656V666M692.5 654V661M693.5 656V666M694.5 627V668M695.5 625V663M696.5 654V661M697.5 654V661M698.5 654V661M699.5 656V666M700.5 656V666M701.5 654V661M702.5 654V666M703.5 654V663M704.5 651V663M705.5 656V663M706.5 656V663M707.5 654V666M708.5 654V661M709.5 654V666M710.5 656V666M711.5 656V668M712.5 654V668M713.5 656V666M714.5 654V663M715.5 651V668M716.5 656V666M717.5 656V666M718.5 656V663M719.5 656V663M720.5 656V666M721.5 654V666M722.5 656V666M723.5 656V661M724.5 656V661M725.5 654V663M726.5 656V666M727.5 656V661M728.5 656V666M729.5 651V661M730.5 654V666M731.5 654V666M732.5 656V666M733.5 656V666M734.5 654V666M735.5 651V666M736.5 659V666M737.5 654V666M738.5 654V663M739.5 654V666M740.5 654V666M741.5 656V663M742.5 654V666M743.5 656V666M744.5 656V663M745.5 656V663M746.5 656V666M747.5 649V666M748.5 649V666M749.5 654V666M750.5 654V666M751.5 654V668M752.5 656V666M753.5 656V666M754.5 656V663M755.5 656V666M756.5 659V663M757.5 656V661M758.5 654V661M759.5 654V666M760.5 656V663M761.5 656V666M762.5 656V666M763.5 656V666M764.5 656V663M765.5 654V663M766.5 656V666M767.5 654V663M768.5 654V666M769.5 654V663M770.5 654V663M771.5 654V666M772.5 656V663M773.5 656V663M774.5 654V663M775.5 654V663M776.5 656V661M777.5 654V666M778.5 656V661M779.5 656V661M780.5 656V663M781.5 656V663M782.5 654V668M783.5 656V663M784.5 654V666M785.5 656V663M786.5 654V661M787.5 654V663M788.5 651V666M789.5 656V663M790.5 656V663M791.5 654V668M792.5 656V666M793.5 654V666M794.5 654V666M795.5 656V666M796.5 654V666M797.5 654V666M798.5 654V663M799.5 654V666M800.5 656V666M801.5 656V661M802.5 654V666M803.5 659V663M804.5 656V666M805.5 656V666M806.5 656V661M807.5 636V661M808.5 636V663M809.5 654V661M810.5 656V663M811.5 656V663M812.5 654V661M813.5 654V666M814.5 654V663M815.5 656V666M816.5 654V666M817.5 654V666M818.5 656V661M819.5 656V666M820.5 656V666M821.5 656V663M822.5 654V666M823.5 656V663M824.5 656V663M825.5 654V663M826.5 654V666M827.5 656V661M828.5 656V666M829.5 654V663M830.5 654V666M831.5 656V666M832.5 656V666M833.5 651V663M834.5 656V666M835.5 654V663M836.5 656V663M837.5 656V666M838.5 654V661M839.5 654V668M840.5 654V663M841.5 654V666M842.5 656V666M843.5 656V663M844.5 656V666M845.5 656V663M846.5 654V666M847.5 654V666M848.5 654V663M849.5 656V663M850.5 656V666M851.5 656V666M852.5 656V666M853.5 654V663M854.5 654V666M855.5 654V666M856.5 654V666M857.5 654V661M858.5 654V666M859.5 654V666M860.5 659V666M861.5 656V666M862.5 656V666M863.5 654V663M864.5 634V666M865.5 625V668M866.5 650V663M867.5 650V666M868.5 654V668M869.5 656V668M870.5 656V666M871.5 656V661M872.5 656V663M873.5 656V663M874.5 656V666M875.5 656V663M876.5 654V666M877.5 656V666M878.5 656V663M879.5 656V666M880.5 654V663M881.5 656V666M882.5 654V663M883.5 654V663M884.5 656V663M885.5 654V663M886.5 654V663M887.5 656V666M888.5 654V666M889.5 656V663M890.5 659V666M891.5 656V663M892.5 654V663M893.5 656V666M894.5 656V666M895.5 656V663M896.5 654V666M897.5 656V663M898.5 656V666M899.5 654V661M900.5 654V666M901.5 656V666M902.5 654V666M903.5 656V666M904.5 656V663M905.5 656V663M906.5 654V666M907.5 656V661M908.5 654V666M909.5 656V666M910.5 656V663M911.5 656V666M912.5 654V663M913.5 654V663M914.5 654V666M915.5 659V666M916.5 654V663M917.5 654V666M918.5 654V666M919.5 654V666M920.5 654V663M921.5 654V663M922.5 654V663M923.5 656V666M924.5 654V666M925.5 659V666M926.5 654V666M927.5 656V666M928.5 656V663M929.5 656V663M930.5 654V661M931.5 654V661M932.5 659V666M933.5 656V668M934.5 654V663M935.5 656V663M936.5 656V668M937.5 659V666M938.5 656V666M939.5 654V668M940.5 656V666M941.5 654V666M942.5 656V666M943.5 656V663M944.5 654V666M945.5 656V666M946.5 656V663M947.5 656V663M948.5 654V666M949.5 654V666M950.5 656V663M951.5 656V661M952.5 656V666M953.5 656V663M954.5 654V663M955.5 656V663M956.5 654V661M957.5 654V663M958.5 654V663M959.5 654V663M960.5 651V663M961.5 656V666M962.5 656V666M963.5 654V666M964.5 656V666M965.5 651V666M966.5 654V663M967.5 656V663M968.5 656V661M969.5 654V663M970.5 654V666M971.5 654V661M972.5 654V666M973.5 656V663M974.5 654V661M975.5 654V663M976.5 656V663M977.5 654V661M978.5 656V661M979.5 656V661M980.5 654V666M981.5 654V666M982.5 654V663M983.5 654V666M984.5 656V663M985.5 651V666M986.5 656V663M987.5 654V668M988.5 656V666M989.5 654V663M990.5 654V663M991.5 656V668M992.5 656V666M993.5 656V663M994.5 656V663M995.5 654V666M996.5 656V666M997.5 656V666M998.5 656V666M999.5 656V666M1000.5 656V666M1001.5 654V666M1002.5 654V666M1003.5 656V666M1004.5 651V666M1005.5 656V666M1006.5 656V663M1007.5 654V666M1008.5 654V666M1009.5 656V666M1010.5 654V666M1011.5 654V666M1012.5 656V661M1013.5 656V661M1014.5 654V666M1015.5 654V663M1016.5 654V666M1017.5 654V663M1018.5 656V666M1019.5 654V666M1020.5 654V663" stroke="#00ff00"/>
<!-- graticule -->
<g stroke="#ffffff">
<path d="M41 82.5H1002" stroke-dasharray="1 19"/>
<path d="M22 82.5H27" stroke-dasharray="1 1"/>
<path d="M1015 82.5H1020" stroke-dasharray="1 1"/>
<path d="M41 147.5H1002" stroke-dasharray="1 19"/>
<path d="M22 147.5H27" stroke-dasharray="1 1"/>
<path d="M1015 147.5H1020" stroke-dasharray="1 1"/>
<path d="M41 212.5H1002" stroke-dasharray="1 19"/>
<path d="M22 212.5H27" stroke-dasharray="1 1"/>
<path d="M1015 212.5H1020" stroke-dasharray="1 1"/>
<path d="M41 277.5H1002" stroke-dasharray="1 19"/>
<path d="M22 277.5H27" stroke-dasharray="1 1"/>
<path d="M1015 277.5H1020" stroke-dasharray="1 1"/>
<path d="M41 407.5H1002" stroke-dasharray="1 19"/>
<path d="M22 407.5H27" stroke-dasharray="1 1"/>
<path d="M1015 407.5H1020" stroke-dasharray="1 1"/>
<path d="M41 472.5H1002" stroke-dasharray="1 19"/>
<path d="M22 472.5H27" stroke-dasharray="1 1"/>
<path d="M1015 472.5H1020" stroke-dasharray="1 1"/>
<path d="M41 537.5H1002" stroke-dasharray="1 19"/>
<path d="M22 537.5H27" stroke-dasharray="1 1"/>
<path d="M1015 537.5H1020" stroke-dasharray="1 1"/>
<path d="M41 602.5H1002" stroke-dasharray="1 19"/>
<path d="M22 602.5H27" stroke-dasharray="1 1"/>
<path d="M1015 602.5H1020" stroke-dasharray="1 1"/>
<path d="M121.5 30V655" stroke-dasharray="1 12"/>
<path d="M121.5 18V23" stroke-dasharray="1 1"/>
<path d="M121.5 662V667" stroke-dasharray="1 1"/>
<path d="M221.5 30V655" stroke-dasharray="1 12"/>
<path d="M221.5 18V23" stroke-dasharray="1 1"/>
<path d="M221.5 662V667" stroke-dasharray="1 1"/>
<path d="M321.5 30V655" stroke-dasharray="1 12"/>
<path d="M321.5 18V23" stroke-dasharray="1 1"/>
<path d="M321.5 662V667" stroke-dasharray="1 1"/>
<path d="M421.5 30V655" stroke-dasharray="1 12"/>
<path d="M421.5 18V23" stroke-dasharray="1 1"/>
<path d="M421.5 662V667" stroke-dasharray="1 1"/>
<path d="M621.5 30V655" stroke-dasharray="1 12"/>
<path d="M621.5 18V23" stroke-dasharray="1 1"/>
<path d="M621.5 662V667" stroke-dasharray="1 1"/>
<path d="M721.5 30V655" stroke-dasharray="1 12"/>
<path d="M721.5 18V23" stroke-dasharray="1 1"/>
<path d="M721.5 662V667" stroke-dasharray="1 1"/>
<path d="M821.5 30V655" stroke-dasharray="1 12"/>
<path d="M821.5 18V23" stroke-dasharray="1 1"/>
<path d="M821.5 662V667" stroke-dasharray="1 1"/>
<path d="M921.5 30V655" stroke-dasharray="1 12"/>
<path d="M921.5 18V23" stroke-dasharray="1 1"/>
<path d="M921.5 662V667" stroke-dasharray="1 1"/>
<path d="M21 342.5H1020" stroke-dasharray="1 1"/>
<path d="M521.5 24V667" stroke-dasharray="1 1"/>
<path d="M41 339.5H502" stroke-dasharray="1 19 1 19 1 19 1 39"/>
<path d="M541 339.5H1002" stroke-dasharray="1 19 1 19 1 19 1 39"/>
<path d="M41 341.5H502" stroke-dasharray="1 19 1 19 1 19 1 39"/>
<path d="M541 341.5H1002" stroke-dasharray="1 19 1 19 1 19 1 39"/>
<path d="M41 343.5H502" stroke-dasharray="1 19 1 19 1 19 1 39"/>
<path d="M541 343.5H1002" stroke-dasharray="1 19 1 19 1 19 1 39"/>
<path d="M41 345.5H502" stroke-dasharray="1 19 1 19 1 19 1 39"/>
<path d="M541 345.5H1002" stroke-dasharray="1 19 1 19 1 19 1 39"/>
<path d="M121.5 336V349" stroke-dasharray="1 1"/>
<path d="M221.5 336V349" stroke-dasharray="1 1"/>
<path d="M321.5 336V349" stroke-dasharray="1 1"/>
<path d="M421.5 336V349" stroke-dasharray="1 1"/>
<path d="M621.5 336V349" stroke-dasharray="1 1"/>
<path d="M721.5 336V349" stroke-dasharray="1 1"/>
<path d="M821.5 336V349" stroke-dasharray="1 1"/>
<path d="M921.5 336V349" stroke-dasharray="1 1"/>
<path d="M518.5 30V330" stroke-dasharray="1 12 1 12 1 12 1 25"/>
<path d="M518.5 355V655" stroke-dasharray="1 12 1 12 1 12 1 25"/>
<path d="M520.5 30V330" stroke-dasharray="1 12 1 12 1 12 1 25"/>
<path d="M520.5 355V655" stroke-dasharray="1 12 1 12 1 12 1 25"/>
<path d="M521.5 30V330" stroke-dasharray="1 12 1 12 1 12 1 25"/>
<path d="M521.5 355V655" stroke-dasharray="1 12 1 12 1 12 1 25"/>
<path d="M522.5 30V330" stroke-dasharray="1 12 1 12 1 12 1 25"/>
<path d="M522.5 355V655" stroke-dasharray="1 12 1 12 1 12 1 25"/>
<path d="M524.5 30V330" stroke-dasharray="1 12 1 12 1 12 1 25"/>
<path d="M524.5 355V655" stroke-dasharray="1 12 1 12 1 12 1 25"/>
<path d="M515 82.5H528" stroke-dasharray="1 1"/>
<path d="M521.5 82V83" stroke-dasharray="1 0"/>
<path d="M515 147.5H528" stroke-dasharray="1 1"/>
<path d="M521.5 147V148" stroke-dasharray="1 0"/>
<path d="M515 212.5H528" stroke-dasharray="1 1"/>
<path d="M521.5 212V213" stroke-dasharray="1 0"/>
<path d="M515 277.5H528" stroke-dasharray="1 1"/>
<path d="M521.5 277V278" stroke-dasharray="1 0"/>
<path d="M515 407.5H528" stroke-dasharray="1 1"/>
<path d="M521.5 407V408" stroke-dasharray="1 0"/>
<path d="M515 472.5H528" stroke-dasharray="1 1"/>
<path d="M521.5 472V473" stroke-dasharray="1 0"/>
<path d="M515 537.5H528" stroke-dasharray="1 1"/>
<path d="M521.5 537V538" stroke-dasharray="1 0"/>
<path d="M515 602.5H528" stroke-dasharray="1 1"/>
<path d="M521.5 602V603" stroke-dasharray="1 0"/>
<path d="M41 17.5H1002" stroke-dasharray="1 19 1 19 1 19 1 39"/>
<path d="M41 19.5H1002" stroke-dasharray="1 19 1 19 1 19 1 39"/>
<path d="M41 665.5H1002" stroke-dasharray="1 19 1 19 1 19 1 39"/>
<path d="M41 667.5H1002" stroke-dasharray="1 19 1 19 1 19 1 39"/>
<path d="M21.5 30V655" stroke-dasharray="1 12 1 12 1 12 1 25"/>
<path d="M23.5 30V655" stroke-dasharray="1 12 1 12 1 12 1 25"/>
<path d="M1018.5 30V655" stroke-dasharray="1 12 1 12 1 12 1 25"/>
<path d="M1020.5 30V655" stroke-dasharray="1 12 1 12 1 12 1 25"/>
</g>
<!-- record-view bracket -->
<rect x="519" y="1" width="5" height="14" fill="#ffffff"/>
<rect x="521" y="3" width="1" height="10" fill="#000"/>
<rect x="521" y="3" width="1" height="2" fill="#ff9c00"/>
<rect x="521" y="7" width="1" height="1" fill="#00dede"/>
<rect x="518" y="1" width="1" height="1" fill="#ff9c00"/>
<rect x="524" y="1" width="1" height="1" fill="#ff9c00"/>
<!-- trigger position triangle -->
<path d="M516 17H527V18H526V19H525V20H524V21H523V22H522V23H521V22H520V21H519V20H518V19H517V18H516Z" fill="#ff9c00"/>
</svg>

<svg width="1024" height="768" viewBox="0 0 1024 768" fill="none">
<!-- T marker (graticule) -->
<path d="M21 30.5L27 24H37L38 25V36L37 37H27Z" fill="#ff9c00"/>
<path d="M27 26H37M32 26V36" stroke="#000" stroke-width="2"/>
<!-- T marker (record view) -->
<path d="M122 10.5L127 5H133L134 6V15L133 16H127Z" fill="#ff9c00"/>
<path d="M127 7H133M130 7V15" stroke="#000" stroke-width="2"/>
<!-- ch3 marker -->
<path d="M1.5 71.5H12.5L20 79.5L12.5 87.5H1.5L0.5 86.5V72.5Z" stroke="#ff58ff" stroke-width="1.4" fill="#000400"/>
<!-- ch2 marker -->
<defs><linearGradient id="g2" x1="0" y1="0" x2="0" y2="1"><stop offset="0" stop-color="#40ffff"/><stop offset="0.1" stop-color="#10f0f0"/><stop offset="0.2" stop-color="#00e8e8"/><stop offset="0.82" stop-color="#00dcdc"/><stop offset="0.92" stop-color="#00b4b4"/><stop offset="1" stop-color="#007c7c"/></linearGradient></defs>
<path d="M0 179L1 178H13L20.5 186L13 195H1L0 194Z" fill="url(#g2)"/>
<!-- ch4 marker -->
<path d="M1.5 658.5H12.5L20 666.5L12.5 674.5H1.5L0.5 673.5V659.5Z" stroke="#30e630" stroke-width="1.5" fill="#000400"/>
</svg>
<div class="abs" style="left:0;top:71px;width:14px;height:17px;text-align:center;font-size:15px;line-height:17px;color:#c018c0;-webkit-text-stroke:0.4px;">3</div>
<div class="abs" style="left:0;top:178px;width:15px;height:17px;text-align:center;font-size:16px;line-height:17px;color:#000;font-weight:bold;">2</div>
<div class="abs" style="left:0;top:658px;width:14px;height:17px;text-align:center;font-size:15px;line-height:17px;color:#14d014;-webkit-text-stroke:0.5px;">4</div>

<!-- channel readout box -->
<div class="box" style="left:20px;top:670px;width:555px;height:21px;"></div>
<div class="pill" style="left:165px;top:673px;background:#00e6e6;">2</div>
<div class="t" style="left:208px;top:672px;color:#00e4e4;letter-spacing:1.3px;">200mV</div>
<div class="t" style="left:268px;top:672px;color:#00e4e4;">&Omega;</div>
<div class="bw" style="left:282px;top:673px;color:#00e4e4;">B</div>
<div class="bw" style="left:287px;top:678px;color:#00e4e4;">W</div>

<div class="pill" style="left:304px;top:673px;background:#a800a8;">3</div>
<div class="t" style="left:346px;top:672px;color:#b000b0;letter-spacing:1.3px;">200mV</div>
<div class="t" style="left:407px;top:672px;color:#b000b0;">&Omega;</div>
<div class="bw" style="left:421px;top:673px;color:#b000b0;">B</div>
<div class="bw" style="left:426px;top:678px;color:#b000b0;">W</div>

<div class="pill" style="left:443px;top:673px;background:#08a808;">4</div>
<div class="t" style="left:487px;top:672px;color:#10ac10;">100mV</div>
<div class="t" style="left:546px;top:672px;color:#10ac10;">&Omega;</div>
<div class="bw" style="left:560px;top:673px;color:#10ac10;">B</div>
<div class="bw" style="left:565px;top:678px;color:#10ac10;">W</div>

<!-- timebase box -->
<div class="box" style="left:582px;top:670px;width:148px;height:38px;"></div>
<div class="t" style="left:589px;top:672px;letter-spacing:1.5px;">2.00&micro;s</div>
<div class="abs" style="left:587px;top:691px;width:12px;height:13px;background:#ff9c00;border-radius:2px;"></div>
<div class="t" style="left:623px;top:689px;color:#ff9c00;">1.806000ms</div>
<svg width="1024" height="768" viewBox="0 0 1024 768" fill="none">
<path d="M588 693H598M593 693V703" stroke="#000" stroke-width="2"/>
<path d="M600 697.5H606" stroke="#ff9c00" stroke-width="1.3"/><path d="M605 694L609.3 697.5L605 701Z" fill="#ff9c00"/>
<path d="M610 694H621.4L615.7 700.4Z" fill="#ff9c00"/>
<path d="M478.6 675V683" stroke="#10ac10" stroke-width="1.7"/><path d="M474.8 681.8H482.4L478.6 686.6Z" fill="#10ac10"/>
<!-- rising edge -->
<path d="M920 685.5H924.3L928 676H932" stroke="#f4f4fc" stroke-width="1.9"/>
</svg>

<!-- acquisition box -->
<div class="box" style="left:737px;top:670px;width:107px;height:38px;"></div>
<div class="t" style="left:744px;top:672px;letter-spacing:0.95px;">2.50GS/s</div>
<div class="t" style="left:744px;top:689px;letter-spacing:1.7px;">5M points</div>

<!-- trigger box -->
<div class="box" style="left:851px;top:670px;width:171px;height:39px;"></div>
<div class="pill" style="left:882px;top:673px;background:#f4f400;">1</div>
<div class="t" style="left:966px;top:672px;">2.10 V</div>

<!-- buttons -->
<div class="btn" style="left:20px;"><span style="top:8px;">Save</span><span style="top:25px;">Screen Image</span></div>
<div class="btn" style="left:138px;"><span style="top:8px;">Save</span><span style="top:25px;">Waveform</span></div>
<div class="btn" style="left:256px;"><span style="top:8px;">Save</span><span style="top:25px;">Setup</span></div>
<div class="btn" style="left:374px;"><span style="top:8px;">Recall</span><span style="top:25px;">Waveform</span></div>
<div class="btn" style="left:492px;"><span style="top:8px;">Recall</span><span style="top:25px;">Setup</span></div>
<div class="btn" style="left:610px;"><span style="top:0px;">Assign</span>
 <span style="top:17px;left:69px;width:auto;letter-spacing:1.6px;">to</span>
 <span style="top:35px;left:30px;width:52px;height:16px;background:#0c68f8;line-height:15px;">Image</span>
 <span style="top:18px;left:28px;width:34px;height:14px;background:#fcfcfc;border-radius:7px 3px 3px 7px;box-shadow:1px 1px 0 #8c8c8c, inset -1px -1px 0 #b0b0b0;color:#000;font-size:11px;line-height:14px;font-weight:bold;letter-spacing:0;">Save</span>
</div>
<div class="btn" style="left:728px;"><span style="top:8px;">File</span><span style="top:25px;">Utilities</span></div>

<!-- date box -->
<div class="box" style="left:909px;top:729px;width:113px;height:37px;"></div>
<div class="t" style="left:924px;top:732px;letter-spacing:1.55px;font-size:15.5px;">4 Nov 2023</div>
<div class="t" style="left:915px;top:748px;letter-spacing:1.55px;font-size:15.5px;">09:39:35</div>
</body>
</html>
